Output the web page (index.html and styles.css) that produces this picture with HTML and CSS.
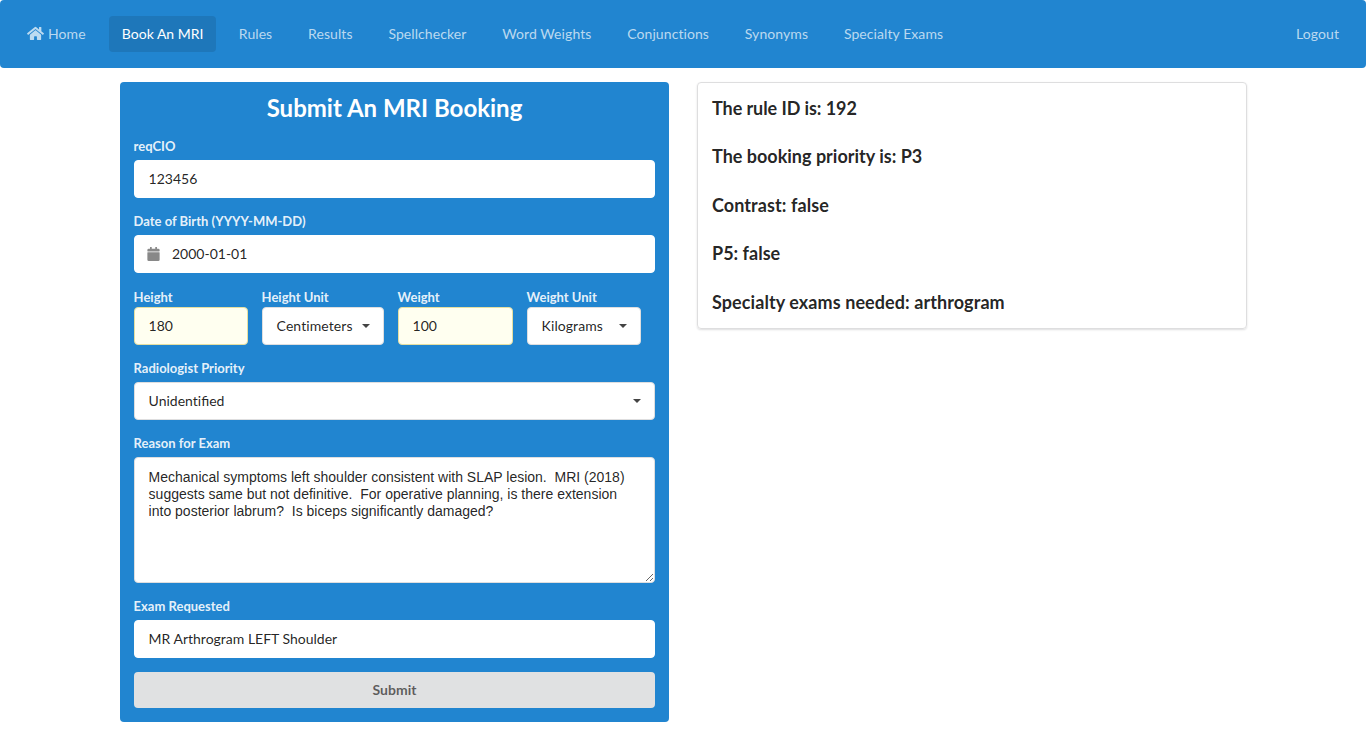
FILE: index.html
```html
<!DOCTYPE html>
<html lang="en">
<head>
<meta charset="utf-8">
<title>Book An MRI</title>
<link rel="stylesheet" href="styles.css">
</head>
<body>
<nav class="menu">
  <a class="item home"><svg class="home-icon" viewBox="0 0 576 512"><path d="M280 148L96 300v164a16 16 0 0 0 16 16l112-.3a16 16 0 0 0 16-16V368a16 16 0 0 1 16-16h64a16 16 0 0 1 16 16v96a16 16 0 0 0 16 16l112 .3a16 16 0 0 0 16-16V300L296 148a12 12 0 0 0-16 0zM572 251l-84-69V44a12 12 0 0 0-12-12h-56a12 12 0 0 0-12 12v72l-90-74a48 48 0 0 0-61 0L4 251a12 12 0 0 0-2 17l26 31a12 12 0 0 0 17 2L280 107a12 12 0 0 1 16 0l235 194a12 12 0 0 0 17-2l26-31a12 12 0 0 0-2-17z"/></svg>Home</a>
  <a class="item active">Book An MRI</a>
  <a class="item">Rules</a>
  <a class="item">Results</a>
  <a class="item">Spellchecker</a>
  <a class="item">Word Weights</a>
  <a class="item">Conjunctions</a>
  <a class="item">Synonyms</a>
  <a class="item">Specialty Exams</a>
  <a class="item logout">Logout</a>
</nav>
<main class="grid">
  <form class="panel">
    <h1>Submit An MRI Booking</h1>
    <div class="field"><label>reqCIO</label><div class="input">123456</div></div>
    <div class="field"><label>Date of Birth (YYYY-MM-DD)</label><div class="input date"><svg class="calendar" viewBox="0 0 448 512"><path d="M12 192h424a12 12 0 0 1 12 12v260a48 48 0 0 1-48 48H48a48 48 0 0 1-48-48V204a12 12 0 0 1 12-12zm436-44v-36a48 48 0 0 0-48-48h-48V12a12 12 0 0 0-12-12h-40a12 12 0 0 0-12 12v52H160V12a12 12 0 0 0-12-12h-40a12 12 0 0 0-12 12v52H48a48 48 0 0 0-48 48v36a12 12 0 0 0 12 12h424a12 12 0 0 0 12-12z"/></svg>2000-01-01</div></div>
    <div class="measures">
      <div class="measure"><label>Height</label><div class="input filled">180</div></div>
      <div class="measure"><label>Height Unit</label><div class="input select"><span class="loose">Centimeters</span><i class="caret"></i></div></div>
      <div class="measure"><label>Weight</label><div class="input filled">100</div></div>
      <div class="measure"><label>Weight Unit</label><div class="input select"><span class="loose">Kilograms</span><i class="caret"></i></div></div>
    </div>
    <div class="field"><label>Radiologist Priority</label><div class="input select"><span><span class="plain">Unident</span>ified</span><i class="caret"></i></div></div>
    <div class="field"><label>Reason for Exam</label><textarea class="reason" spellcheck="false">Mechanical symptoms left shoulder consistent with SLAP lesion.  MRI (2018) suggests same but not definitive.  For operative planning, is there extension into posterior labrum?  Is biceps significantly damaged?</textarea></div>
    <div class="field"><label>Exam Requested</label><div class="input">MR Arthrogram LEFT Shoulder</div></div>
    <button class="submit" type="button">Submit</button>
  </form>
  <section class="card">
    <h2 class="tight">The rule ID is: 192</h2>
    <h2>The booking priority is: P3</h2>
    <h2 class="loose">Contrast: false</h2>
    <h2>P5: false</h2>
    <h2 class="loose">Specialty exams needed: arthrogram</h2>
  </section>
</main>
</body>
</html>
```
FILE: styles.css
```css
* { box-sizing: border-box; }
body { margin: 0; background: #fff; color: rgba(0,0,0,.87); font: 14px/20px Lato, "Liberation Sans", sans-serif; overflow: hidden; }
.menu { height: 68px; padding: 0 14px; background: #2185d0; border-radius: 4px; display: flex; align-items: center; }
.item { height: 36px; padding: 11px 13px; margin-right: 9.8px; line-height: 14px; letter-spacing: .08px; border-radius: 4px; color: rgba(255,255,255,.7); white-space: nowrap; }
.home { display: flex; margin-right: 10.2px; }
.home-icon { width: 17px; height: 15px; margin: -1px 4px 0 0; fill: currentColor; }
.active { background: #1e77ba; color: #fff; letter-spacing: 0; margin-right: 9.4px; }
.logout { margin: 0 0 0 auto; }
.grid { width: 1127px; margin: 14px 0 0 120px; display: grid; grid-template-columns: 549px 550px; gap: 28px; align-items: start; }
.panel { height: 640px; padding: 14px; background: #2185d0; border-radius: 4px; color: #fff; }
h1 { margin: -4px 0 14px; height: 31px; font-size: 24px; line-height: 31px; text-align: center; font-weight: 700; }
label { display: block; height: 18px; margin-bottom: 5px; font-size: 13px; line-height: 18px; font-weight: 700; color: rgba(255,255,255,.9); white-space: nowrap; text-indent: -.4px; }
.field { margin-bottom: 14px; }
.input { height: 38px; padding: 9px 13.6px; line-height: 18px; border: 1px solid #dededf; border-radius: 4px; background: #fff; color: rgba(0,0,0,.87); white-space: nowrap; }
.field > .input:not(.select) { border-color: #fff; }
.date { display: flex; padding-left: 12px; }
.calendar { width: 13px; height: 14px; margin: 2px 12px 0 0; fill: #888; }
.measures { display: grid; grid-template-columns: 114px 122px 115px 114px; gap: 14px; margin: 15px 0 14px; }
.measure label { margin-bottom: 1px; }
.filled { background: #fffff0; border-color: #e5dfa1; }
.select { display: flex; justify-content: space-between; align-items: center; padding-right: 13px; }
.loose { letter-spacing: .08px; }
.tight { letter-spacing: -.08px; }
.plain { font-variant-ligatures: none; }
.caret { border: 4px solid transparent; border-top-color: #444; border-bottom: 0; }
.reason { display: block; width: 100%; height: 126px; padding: 11px 13.6px; border: 1px solid #dededf; border-radius: 4px; color: rgba(0,0,0,.87); font: 14px/17px "Liberation Sans", sans-serif; resize: vertical; outline: 0; }
.submit { display: block; width: 100%; height: 36px; padding: 0; border: 0; border-radius: 4px; background: #e0e1e2; color: rgba(0,0,0,.6); font: 700 14px/14px Lato, sans-serif; }
.card { height: 247px; padding: 13.6px 14px; border: 1px solid #dededf; border-radius: 4px; box-shadow: 0 1px 2px rgba(34,36,38,.15); }
h2 { margin: 0 0 25.5px; font-size: 18px; line-height: 23px; font-weight: 700; }
```
